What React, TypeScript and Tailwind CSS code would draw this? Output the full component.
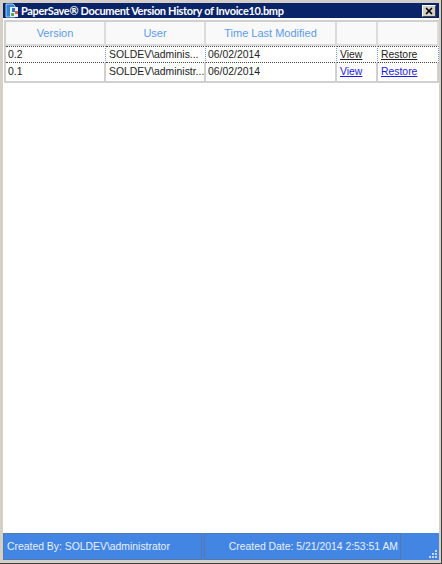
import React from "react";
import { X } from "lucide-react";

const font = { fontFamily: '"Liberation Sans", Tahoma, sans-serif' };
const titleFont = { fontFamily: 'Lato, Tahoma, sans-serif' };

const rows = [
  { version: "0.2", user: "SOLDEV\\adminis...", time: "06/02/2014", selected: true },
  { version: "0.1", user: "SOLDEV\\administr...", time: "06/02/2014", selected: false },
];

const headers = ["Version", "User", "Time Last Modified", "", ""];

const AppIcon = () => (
  <svg width="15" height="15" viewBox="0 0 15 15" className="shrink-0">
    <path d="M1 1h7l2 2v11H1z" fill="#2f86d6" stroke="#a9d6f2" strokeWidth="1" />
    <rect x="5" y="4" width="8" height="10" fill="#e6f0fa" />
    <rect x="7" y="5" width="3" height="4" fill="#3a6fc4" />
    <rect x="10" y="8" width="3" height="3" fill="#e2603c" />
    <rect x="6" y="10" width="3" height="3" fill="#58a858" />
  </svg>
);

const ResizeGrip = () => (
  <svg width="10" height="10" viewBox="0 0 10 10" className="absolute right-[1px] bottom-[1px]">
    {[
      [7, 1],
      [4, 4],
      [7, 4],
      [1, 7],
      [4, 7],
      [7, 7],
    ].map(([x, y]) => (
      <rect key={`${x}-${y}`} x={x} y={y} width="2" height="2" fill="#c9d6ea" />
    ))}
  </svg>
);

export default function App() {
  return (
    <div
      className="w-[442px] h-[564px] flex flex-col bg-[#d4d0c8] border-r border-b border-[#404040] pt-[3px] pl-[3px] pr-[2px] pb-[3px] overflow-hidden text-[10.4px] text-[#222]"
      style={font}
    >
      <div className="h-[15px] shrink-0 flex items-center justify-between bg-[#0a246a] pl-[2px] pr-[3px]">
        <div className="flex items-center gap-[1px]">
          <AppIcon />
          <span className="text-white font-bold text-[11px] tracking-[-0.33px] leading-none" style={titleFont}>
            PaperSave® Document Version History of Invoice10.bmp
          </span>
        </div>
        <button className="w-[14px] h-[12px] flex items-center justify-center bg-[#d4d0c8] border border-white border-r-[#404040] border-b-[#404040]">
          <X className="w-[10px] h-[10px] text-black" strokeWidth={4} />
        </button>
      </div>

      <div className="flex-1 bg-white pt-[2px] pl-[1px] min-h-0">
        <table className="table-fixed border-separate border-spacing-0 w-[435px] border-t-2 border-l-2 border-[#d0d0d0]">
          <colgroup>
            <col className="w-[100px]" />
            <col className="w-[100px]" />
            <col className="w-[131px]" />
            <col className="w-[41px]" />
            <col className="w-[61px]" />
          </colgroup>
          <thead>
            <tr className="h-[24px] bg-[#f9f9f9]">
              {headers.map((h, i) => (
                <th
                  key={i}
                  className="border-r-2 border-b-2 border-[#dcdcdc] font-normal text-center text-[#5b9bea] text-[11px] p-0"
                >
                  {h}
                </th>
              ))}
            </tr>
          </thead>
          <tbody>
            {rows.map((r) => {
              const cell = r.selected
                ? "border-r border-r-[#6ea3e8] border-b border-dotted border-b-[#444] border-t border-t-[#444]"
                : "border-r-2 border-b-2 border-[#d0d0d0]";
              const link = r.selected ? "text-[#222] underline" : "text-[#1a1ae6] underline";
              return (
                <tr key={r.version} className={r.selected ? "h-[17px]" : "h-[20px]"}>
                  <td className={`${cell} pl-[2px] pr-0 pb-0 pt-[1px] leading-none`}>{r.version}</td>
                  <td className={`${cell} pl-[3px] pr-0 pb-0 pt-[1px] leading-none whitespace-nowrap`}>{r.user}</td>
                  <td className={`${cell} pl-[2px] pr-0 pb-0 pt-[1px] leading-none`}>{r.time}</td>
                  <td className={`${cell} pl-[3px] pr-0 pb-0 pt-[1px] leading-none`}>
                    <a className={link}>View</a>
                  </td>
                  <td className={`${cell} pl-[3px] pr-0 pb-0 pt-[1px] leading-none`}>
                    <a className={link}>Restore</a>
                  </td>
                </tr>
              );
            })}
          </tbody>
        </table>
      </div>

      <div className="relative h-[27px] shrink-0 flex bg-[#4285e3] text-[#e8f1fc] text-[10.4px] pr-[38px]">
        <div className="w-[199px] flex items-center pl-[3px] border border-[#5578b0]">
          Created By: SOLDEV\administrator
        </div>
        <div className="flex-1 flex items-center justify-end pr-[2px] ml-[2px] border border-[#5578b0]">
          Created Date: 5/21/2014 2:53:51 AM
        </div>
        <ResizeGrip />
      </div>
    </div>
  );
}
